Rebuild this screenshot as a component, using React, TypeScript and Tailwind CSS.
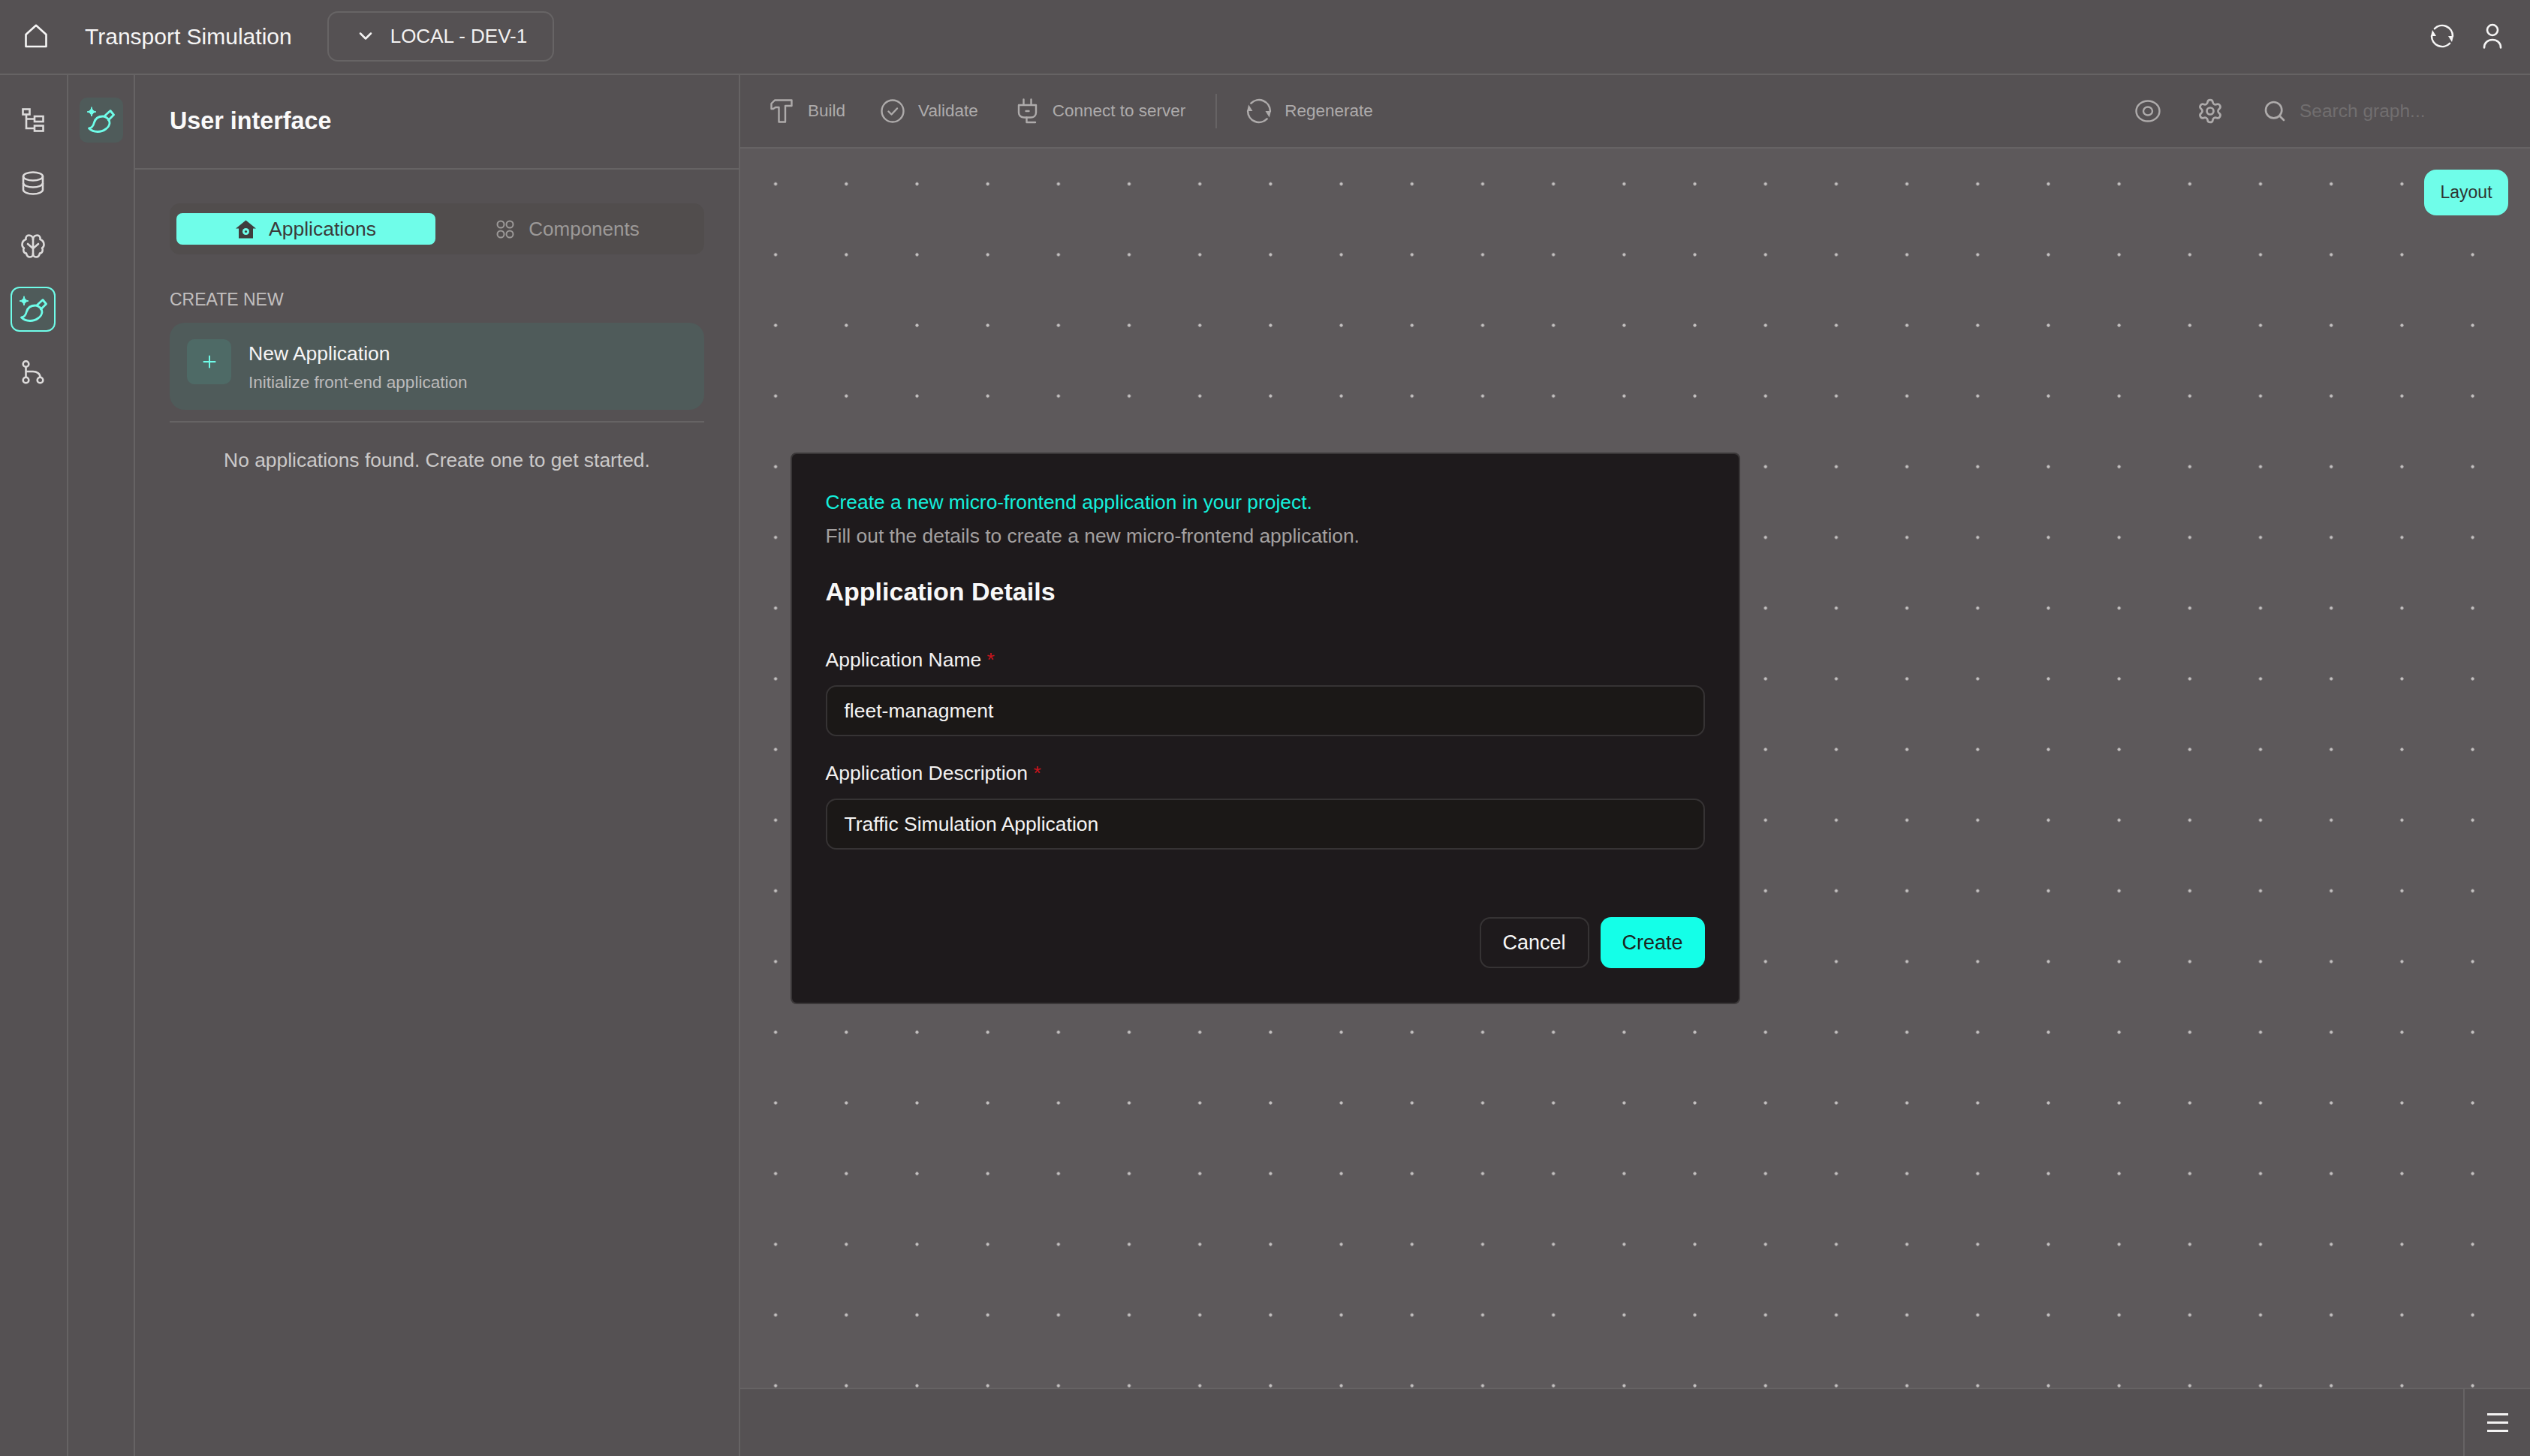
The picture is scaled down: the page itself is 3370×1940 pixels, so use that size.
import React from "react";
import { Settings, Search, ChevronDown, Plus } from "lucide-react";

const Broom = ({ size = 36 }: { size?: number }) => (
  <svg width={size} height={size} viewBox="10 10 37 37" fill="none" stroke="#6ffde9" strokeWidth="2.8" strokeLinejoin="round" strokeLinecap="round">
    <path d="M16 11 C16.6 14.5 18.5 16.4 22 17 C18.5 17.6 16.6 19.5 16 23 C15.4 19.5 13.5 17.6 10 17 C13.5 16.4 15.4 14.5 16 11 Z" fill="#6ffde9" stroke="#6ffde9" strokeWidth="1" />
    <path d="M12.5 39 C16.5 38.5 18.5 35 19.5 31 C21 26 25.5 23 31 23 C32.5 23 34 23.5 35.5 24.5 C38 26 40 29 40 32 C39.5 38 32 43.5 24 43.5 C20 43.5 15.5 42 12.5 39 Z" />
    <path d="M33 23 L36 20 L41 15.5 L45.5 21 L41 25.5 L38.5 28" />
  </svg>
);

const Refresh = ({ size, color, sw }: { size: number; color: string; sw: number }) => (
  <svg width={size} height={size} viewBox="0 0 32 32" fill="none" stroke={color} strokeWidth={sw} strokeLinecap="round">
    <path d="M6 6.2 A14 14 0 0 1 30 16" />
    <path d="M26 25.8 A14 14 0 0 1 2 16" />
    <path d="M8 16 L1 16 L3 8 Z" fill={color} stroke="none" />
    <path d="M24 16 L31 16 L29 24 Z" fill={color} stroke="none" />
  </svg>
);

const RailButton = ({ children, active }: { children: React.ReactNode; active?: boolean }) => (
  <div
    className={
      active
        ? "flex h-[60px] w-[60px] items-center justify-center rounded-[12px] border-2 border-[#6ffde9] bg-[#4f5b5a]"
        : "flex h-[60px] w-[60px] items-center justify-center"
    }
  >
    {children}
  </div>
);

const TOOLBAR_GREY = "#aeabab";

const ToolItem = ({ icon, label, className }: { icon: React.ReactNode; label: string; className?: string }) => (
  <div className={`flex items-center ${className ?? ""}`}>
    {icon}
    <span className="text-[22.5px] text-[#aeabab]">{label}</span>
  </div>
);

const Field = ({ label, value, className }: { label: string; value: string; className?: string }) => (
  <div className={className}>
    <div className="text-[26.5px] leading-[32px] text-[#f3f2f2]">
      {label} <span className="text-[#c9141c]">*</span>
    </div>
    <div className="mt-[18px] flex h-[68px] items-center rounded-[14px] border-2 border-[#363334] bg-[#1b1817] px-[23px] pt-[2px] text-[26.5px] text-[#f5f4f4]">
      {value}
    </div>
  </div>
);

export default function App() {
  return (
    <div className="flex h-screen w-full flex-col overflow-hidden bg-[#555153] font-['Liberation_Sans',Arial,sans-serif] text-white">
      {/* Header */}
      <header className="flex h-[100px] shrink-0 items-center border-b-2 border-[#666364] pb-[2px] pl-[33px] pr-[37px]">
        <svg width="30" height="32" viewBox="0 0 30 32" fill="none" stroke="#f6f5f5" strokeWidth="2.6" strokeLinejoin="round">
          <path d="M1.5 14 L15 1.8 L28.5 14 V30 H1.5 Z" />
        </svg>
        <span className="ml-[50px] text-[30px] text-[#f6f5f5]">Transport Simulation</span>
        <div className="ml-[47px] flex h-[67px] w-[302px] items-center rounded-[14px] border-2 border-[#676465] pl-[35px]">
          <ChevronDown size={28} strokeWidth={2.2} color="#f3f2f2" />
          <span className="ml-[19px] text-[26px] text-[#f3f2f2]">LOCAL - DEV-1</span>
        </div>
        <div className="ml-auto flex items-center gap-[38px]">
          <Refresh size={32} color="#f6f5f5" sw={2.6} />
          <svg width="26" height="34" viewBox="0 0 26 34" fill="none" stroke="#f6f5f5" strokeWidth="2.6" strokeLinecap="round">
            <circle cx="13" cy="9" r="7" />
            <path d="M2 32.5 C2 26 7 22 13 22 C19 22 24 26 24 32.5" />
          </svg>
        </div>
      </header>

      <div className="flex min-h-0 flex-1">
        {/* Rail 1 */}
        <aside className="flex w-[91px] shrink-0 flex-col items-center gap-[24px] border-r-2 border-[#666364] pr-[1px] pt-[30px]">
          <RailButton>
            <svg width="30" height="32" viewBox="0 0 30 32" fill="none" stroke="#dddbdb" strokeWidth="2.6">
              <rect x="1.5" y="1.5" width="9" height="7" />
              <rect x="17" y="11" width="11.5" height="7" />
              <rect x="17" y="23.5" width="11.5" height="7" />
              <path d="M6 8.5 V27 H17 M6 14.5 H17" />
            </svg>
          </RailButton>
          <RailButton>
            <svg width="30" height="32" viewBox="0 0 30 32" fill="none" stroke="#dddbdb" strokeWidth="2.6">
              <ellipse cx="15" cy="7" rx="13" ry="5.5" />
              <path d="M2 7 V25 C2 28 8 30.5 15 30.5 C22 30.5 28 28 28 25 V7" />
              <path d="M2 16 C2 19 8 21.5 15 21.5 C22 21.5 28 19 28 16" />
            </svg>
          </RailButton>
          <RailButton>
            <svg width="32" height="32" viewBox="0 0 32 32" fill="none" stroke="#dddbdb" strokeWidth="2.6" strokeLinejoin="round" strokeLinecap="round">
              <path d="M16 7 C16 3 13 1.5 10.5 1.5 C7.5 1.5 6 4 6.5 7 C3.5 8 1.5 11 1.5 14 C1.5 16 2.5 17.5 4 18.5 C2.5 20.5 3 25 7 25.5 C7.5 28.5 9.5 30.5 12 30.5 C14.5 30.5 16 28.5 16 26 V7 Z" />
              <path d="M16 7 C16 3 19 1.5 21.5 1.5 C24.5 1.5 26 4 25.5 7 C28.5 8 30.5 11 30.5 14 C30.5 16 29.5 17.5 28 18.5 C29.5 20.5 29 25 25 25.5 C24.5 28.5 22.5 30.5 20 30.5 C17.5 30.5 16 28.5 16 26" />
              <path d="M9 13 L16 19 L23 13" />
            </svg>
          </RailButton>
          <RailButton active>
            <Broom size={37} />
          </RailButton>
          <RailButton>
            <svg width="30" height="32" viewBox="0 0 30 32" fill="none" stroke="#dddbdb" strokeWidth="2.6">
              <circle cx="5.5" cy="5" r="3.8" />
              <circle cx="5.5" cy="26.5" r="3.8" />
              <circle cx="24.5" cy="26.5" r="3.8" />
              <path d="M5.5 9 V22.5 M5.5 15 H15 C20 15 24.5 18 24.5 22.5" />
            </svg>
          </RailButton>
        </aside>

        {/* Rail 2 */}
        <aside className="flex w-[89px] shrink-0 flex-col items-center border-r-2 border-[#666364] pt-[30px]">
          <div className="flex h-[60px] w-[58px] items-center justify-center rounded-[10px] bg-[#4f5b5a]">
            <Broom size={37} />
          </div>
        </aside>

        {/* Panel */}
        <aside className="flex w-[806px] shrink-0 flex-col border-r-2 border-[#666364]">
          <div className="flex h-[126px] shrink-0 items-center border-b-2 border-[#666364] px-[46px] pb-[2px]">
            <h1 className="text-[32.3px] font-bold text-[#fafafa]">User interface</h1>
          </div>
          <div className="flex flex-col px-[46px] pt-[45px]">
            <div className="flex h-[68px] items-center rounded-[14px] bg-[#514d4d] px-[9px]">
              <div className="flex h-[42px] w-[345px] items-center justify-center gap-[17px] rounded-[8px] bg-[#6ffde9] pt-[1px] text-[#3b3a3a]">
                <svg width="27" height="25" viewBox="0 0 27 25" fill="#3f3d3d">
                  <path d="M13.5 0.5 L27 11.5 L23 11.5 V24.5 H4 V11.5 L0 11.5 Z" />
                  <circle cx="13.5" cy="15.5" r="4.5" fill="#6ffde9" />
                  <circle cx="13.5" cy="15.5" r="1.6" fill="#3f3d3d" />
                </svg>
                <span className="text-[26.5px]">Applications</span>
              </div>
              <div className="flex h-[42px] flex-1 items-center justify-center gap-[19px] pl-[4px] pt-[1px] text-[#9c9998]">
                <svg width="24" height="32" viewBox="0 0 24 32" fill="none" stroke="#9c9998" strokeWidth="2">
                  <circle cx="6" cy="9" r="4.5" />
                  <circle cx="18" cy="9" r="4.5" />
                  <circle cx="6" cy="22" r="4.5" />
                  <circle cx="18" cy="22" r="4.5" />
                </svg>
                <span className="text-[26px]">Components</span>
              </div>
            </div>

            <div className="mt-[46px] text-[23px] leading-[28px] text-[#c2bfbf]">CREATE NEW</div>

            <div className="mt-[17px] flex h-[116px] items-start rounded-[20px] bg-[#4f5b5a] pl-[23px] pt-[22px]">
              <div className="flex h-[60px] w-[59px] items-center justify-center rounded-[10px] bg-[#4e6a66]">
                <Plus size={26} strokeWidth={1.8} color="#6ffde9" />
              </div>
              <div className="ml-[23px] flex flex-col">
                <span className="text-[26.5px] leading-[38px] text-[#f6f5f5]">New Application</span>
                <span className="mt-[1px] text-[22.5px] leading-[37px] text-[#bcbaba]">Initialize front-end application</span>
              </div>
            </div>

            <div className="mt-[15px] h-[2px] bg-[#666364]" />
            <p className="mt-[34px] text-center text-[26.4px] leading-[32px] text-[#cbc9c9]">
              No applications found. Create one to get started.
            </p>
          </div>
        </aside>

        {/* Main */}
        <main className="flex min-w-0 flex-1 flex-col">
          <div className="flex h-[98px] shrink-0 items-center border-b-2 border-[#666364] pl-[40px] pr-[127px]">
            <ToolItem
              className="gap-[20px]"
              icon={
                <svg width="30" height="32" viewBox="0 0 30 32" fill="none" stroke={TOOLBAR_GREY} strokeWidth="2.4" strokeLinejoin="round">
                  <path d="M1.5 13 V6 L6 1.5 H28.5 V9 H20 V30.5 H11.5 V11 H7 L4 13 Z" />
                </svg>
              }
              label="Build"
            />
            <ToolItem
              className="ml-[47px] gap-[18px]"
              icon={
                <svg width="32" height="32" viewBox="0 0 32 32" fill="none" stroke={TOOLBAR_GREY} strokeWidth="2.4" strokeLinecap="round" strokeLinejoin="round">
                  <circle cx="16" cy="16" r="14.5" />
                  <path d="M10.5 16.5 L14.5 20.5 L22 12.5" />
                </svg>
              }
              label="Validate"
            />
            <ToolItem
              className="ml-[52px] gap-[19px]"
              icon={
                <svg width="28" height="34" viewBox="0 0 28 34" fill="none" stroke={TOOLBAR_GREY} strokeWidth="2.4" strokeLinecap="round" strokeLinejoin="round">
                  <path d="M8.5 1.5 V9 M18.5 1.5 V9 M2 9 H25 V19 C25 23 22 25.5 18 25.5 H9 C5 25.5 2 23 2 19 Z" />
                  <path d="M11.5 17 H15.5" />
                  <path d="M12.5 25.5 V32 H24" />
                </svg>
              }
              label="Connect to server"
            />
            <div className="ml-[40px] h-[46px] w-[2px] bg-[#666364]" />
            <ToolItem
              className="ml-[39px] gap-[17px]"
              icon={<Refresh size={34} color={TOOLBAR_GREY} sw={2.4} />}
              label="Regenerate"
            />
            <div className="ml-auto flex items-center">
              <svg width="34" height="34" viewBox="0 0 34 34" fill="none" stroke={TOOLBAR_GREY} strokeWidth="2.4">
                <ellipse cx="17" cy="17" rx="15.5" ry="13.5" />
                <ellipse cx="17" cy="17" rx="6" ry="5.5" />
              </svg>
              <Settings size={36} strokeWidth={1.8} color={TOOLBAR_GREY} className="ml-[48px]" />
              <Search size={32} strokeWidth={2} color={TOOLBAR_GREY} className="ml-[52px]" />
              <span className="ml-[17px] w-[180px] whitespace-nowrap text-[24.5px] text-[#716e6f]">Search graph...</span>
            </div>
          </div>

          <div className="relative min-h-0 flex-1 bg-[#5d595b] bg-[radial-gradient(circle_at_center,#c4c1c1_0,#c4c1c1_1.8px,transparent_2.4px)] bg-[size:94.2px_94.2px]">
            <button className="absolute right-[29px] top-[28px] flex h-[61px] w-[112px] items-center justify-center rounded-[16px] bg-[#6ffde9] text-[23px] text-[#2f3533]">
              Layout
            </button>
          </div>

          <div className="flex h-[91px] shrink-0 justify-end border-t-2 border-[#666364]">
            <div className="flex w-[89px] items-center justify-center border-l-2 border-[#666364]">
              <div className="flex w-[28px] flex-col gap-[8px]">
                <div className="h-[3px] bg-[#f4f3f3]" />
                <div className="h-[3px] bg-[#f4f3f3]" />
                <div className="h-[3px] bg-[#f4f3f3]" />
              </div>
            </div>
          </div>
        </main>
      </div>

      {/* Dialog */}
      <div className="fixed inset-0 flex items-center justify-center">
        <div className="flex h-[735px] w-[1265px] flex-col rounded-[8px] border-2 border-[#3a3738] bg-[#1e1a1c] px-[45px] pt-[48px] pb-[46px]">
          <p className="text-[26.4px] leading-[32px] text-[#14f0dc]">Create a new micro-frontend application in your project.</p>
          <p className="mt-[13px] text-[26.4px] leading-[32px] text-[#a3a0a0]">Fill out the details to create a new micro-frontend application.</p>
          <h2 className="mt-[38px] text-[34px] font-bold leading-[40px] text-[#f8f8f8]">Application Details</h2>
          <Field className="mt-[55px]" label="Application Name" value="fleet-managment" />
          <Field className="mt-[33px]" label="Application Description" value="Traffic Simulation Application" />
          <div className="mt-auto flex justify-end gap-[15px]">
            <button className="h-[68px] w-[146px] rounded-[14px] border-2 border-[#363334] pt-[2px] text-[27px] text-[#f8f8f8]">Cancel</button>
            <button className="h-[68px] w-[139px] rounded-[14px] bg-[#14ffe8] pt-[2px] text-[27px] text-[#1b2422]">Create</button>
          </div>
        </div>
      </div>
    </div>
  );
}
